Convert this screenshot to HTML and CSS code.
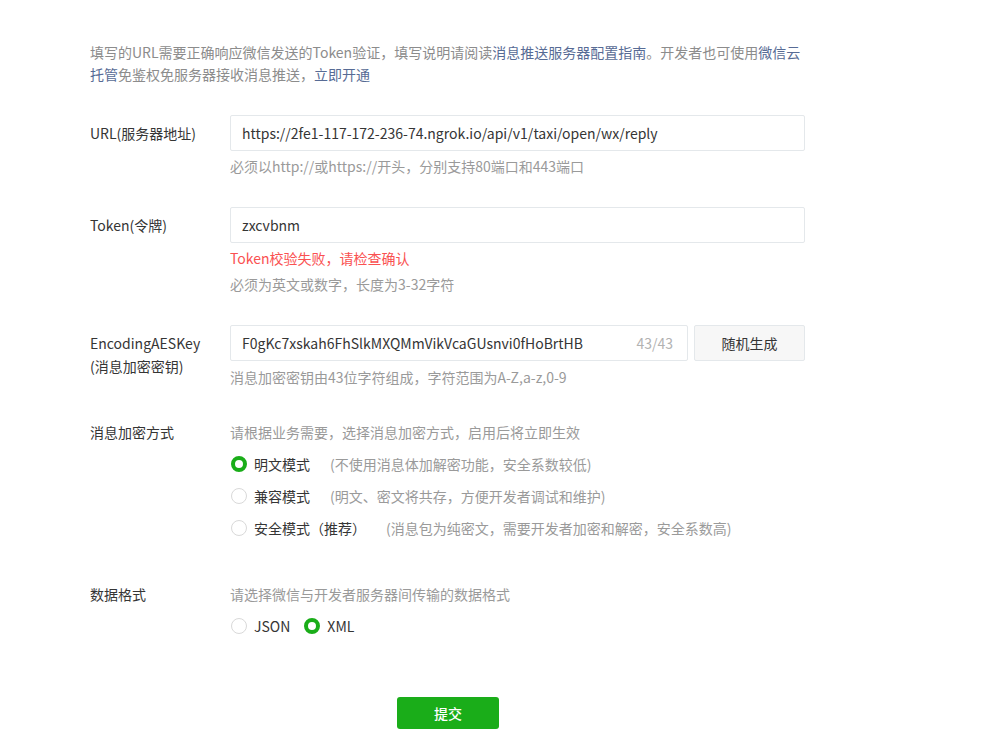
FILE: index.html
```html
<!DOCTYPE html>
<html lang="zh-CN">
<head>
<meta charset="utf-8">
<link rel="stylesheet" href="styles.css">
</head>
<body>
<div class="page">
  <p class="intro">填写的URL需要正确响应微信发送的Token验证，填写说明请阅读<a class="link">消息推送服务器配置指南</a>。开发者也可使用<a class="link">微信云托管</a>免鉴权免服务器接收消息推送，<a class="link">立即开通</a></p>

  <div class="row row-url">
    <div class="label">URL(服务器地址)</div>
    <div class="field">
      <div class="input">https://2fe1-117-172-236-74.ngrok.io/api/v1/taxi/open/wx/reply</div>
      <div class="hint">必须以http://或https://开头，分别支持80端口和443端口</div>
    </div>
  </div>

  <div class="row row-token">
    <div class="label">Token(令牌)</div>
    <div class="field">
      <div class="input">zxcvbnm</div>
      <div class="error">Token校验失败，请检查确认</div>
      <div class="hint">必须为英文或数字，长度为3-32字符</div>
    </div>
  </div>

  <div class="row row-key">
    <div class="label">EncodingAESKey<br>(消息加密密钥)</div>
    <div class="field">
      <div class="key-line">
        <div class="input input-key"><span>F0gKc7xskah6FhSlkMXQMmVikVcaGUsnvi0fHoBrtHB</span><span class="counter">43/43</span></div>
        <div class="btn-gen">随机生成</div>
      </div>
      <div class="hint">消息加密密钥由43位字符组成，字符范围为A-Z,a-z,0-9</div>
    </div>
  </div>

  <div class="row row-mode">
    <div class="label label-plain">消息加密方式</div>
    <div class="field">
      <div class="desc">请根据业务需要，选择消息加密方式，启用后将立即生效</div>
      <div class="radios-col">
        <div class="radio-item"><span class="radio checked"></span><span class="rtext">明文模式</span><span class="rdesc">(不使用消息体加解密功能，安全系数较低)</span></div>
        <div class="radio-item"><span class="radio"></span><span class="rtext">兼容模式</span><span class="rdesc">(明文、密文将共存，方便开发者调试和维护)</span></div>
        <div class="radio-item"><span class="radio"></span><span class="rtext">安全模式（推荐）</span><span class="rdesc">(消息包为纯密文，需要开发者加密和解密，安全系数高)</span></div>
      </div>
    </div>
  </div>

  <div class="row row-format">
    <div class="label label-plain">数据格式</div>
    <div class="field">
      <div class="desc">请选择微信与开发者服务器间传输的数据格式</div>
      <div class="radios-inline">
        <div class="radio-item"><span class="radio"></span><span class="rtext">JSON</span></div>
        <div class="radio-item"><span class="radio checked"></span><span class="rtext">XML</span></div>
      </div>
    </div>
  </div>

  <div class="actions">
    <div class="btn-submit">提交</div>
  </div>
</div>
</body>
</html>
```

FILE: styles.css
```css
* { box-sizing: border-box; }
html, body { margin: 0; padding: 0; background: #fff; }
body {
  font-family: "Microsoft YaHei", "Noto Sans CJK SC", "Noto Sans", sans-serif;
  font-size: 14px;
  color: #353535;
  line-height: 22px;
}
.page {
  padding: 41px 0 0 90px;
  width: 900px;
}
.intro {
  margin: 0;
  width: 716px;
  color: #8c8c8c;
  line-height: 22px;
}
.link { color: #576b95; text-decoration: none; }

.row { display: flex; }
.label {
  width: 140px;
  flex: none;
  padding-top: 7px;
  line-height: 23px;
  color: #353535;
}
.label-plain { padding-top: 0; line-height: 22px; }
.field { width: 575px; }

.row-url { margin-top: 30px; }
.row-token { margin-top: 30px; }
.row-key { margin-top: 30px; }
.row-mode { margin-top: 33px; }
.row-format { margin-top: 44px; }

.input {
  height: 36px;
  border: 1px solid #e4e8eb;
  border-radius: 2px;
  padding: 0 11px;
  display: flex;
  align-items: center;
  color: #353535;
}
.hint { color: #9a9a9a; margin-top: 4px; }
.row-key .hint { margin-top: 5px; }
.error { color: #fa5151; margin-top: 4px; }

.key-line { display: flex; gap: 6px; }
.input-key { width: 458px; justify-content: space-between; padding-right: 14px; }
.counter { color: #b2b2b2; }
.btn-gen {
  flex: 1;
  height: 36px;
  border: 1px solid #e4e8eb;
  border-radius: 2px;
  background: #f7f7f7;
  display: flex;
  align-items: center;
  justify-content: center;
  color: #353535;
}

.desc { color: #9a9a9a; }
.radios-col { margin-top: 10px; display: flex; flex-direction: column; gap: 10px; }
.radio-item { display: flex; align-items: center; height: 22px; }
.radio {
  width: 16px;
  height: 16px;
  border-radius: 50%;
  border: 1px solid #d9d9d9;
  margin-left: 1px;
  margin-right: 7px;
  flex: none;
}
.radio.checked { border: 4px solid #1aad19; }
.rtext { color: #353535; }
.rdesc { color: #9a9a9a; margin-left: 20px; }
.radios-inline { margin-top: 10px; display: flex; gap: 13px; }

.actions { padding-left: 307px; margin-top: 60px; }
.btn-submit {
  width: 102px;
  height: 32px;
  border-radius: 3px;
  background: #1aad19;
  color: #fff;
  font-weight: 500;
  display: flex;
  align-items: center;
  justify-content: center;
}
```
